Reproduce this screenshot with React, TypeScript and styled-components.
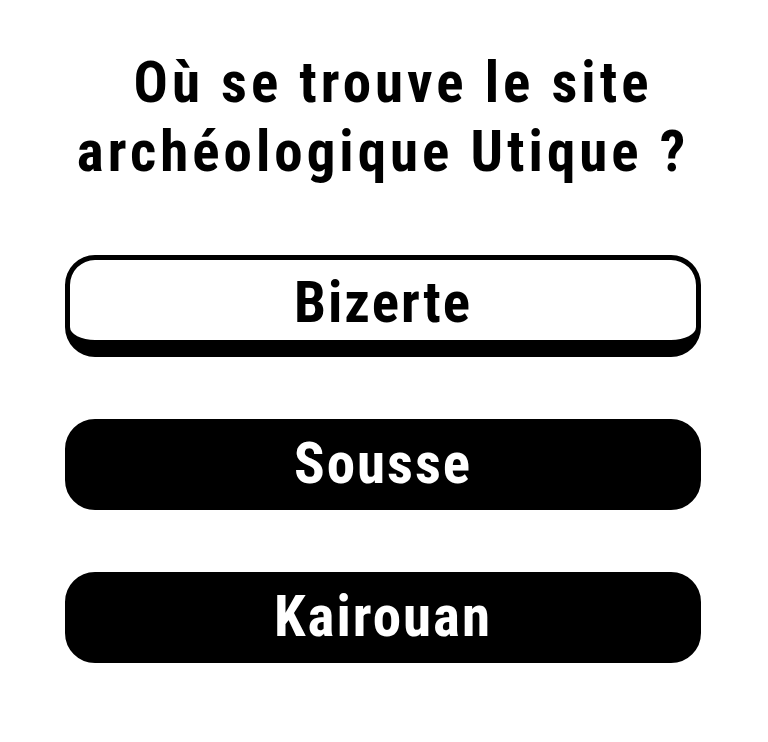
import styled, { createGlobalStyle } from "styled-components";

const GlobalStyle = createGlobalStyle`
  html, body {
    margin: 0;
    padding: 0;
    background: #fff;
  }
`;

const options = [
  { label: "Bizerte", selected: true },
  { label: "Sousse", selected: false },
  { label: "Kairouan", selected: false },
];

const App = () => {
  return (
    <>
      <GlobalStyle />
      <Page>
        <Question>
          <Line $indent={20}>Où se trouve le site</Line>
          <Line $indent={0}>archéologique Utique ?</Line>
        </Question>
        <Answers>
          {options.map((o) => (
            <Answer key={o.label} $selected={o.selected}>
              {o.label}
            </Answer>
          ))}
        </Answers>
      </Page>
    </>
  );
};

const Page = styled.div`
  width: 768px;
  height: 742px;
  box-sizing: border-box;
  padding: 48px 67px 0 65px;
  display: flex;
  flex-direction: column;
  font-family: "Roboto Condensed", "Liberation Sans", Arial, sans-serif;
  font-weight: 700;
`;

const Question = styled.h1`
  margin: 0;
  font-size: 57px;
  line-height: 69px;
  font-weight: 700;
  letter-spacing: 4px;
  text-align: center;
  color: #000;
`;

const Line = styled.span<{ $indent: number }>`
  display: block;
  padding-left: ${(p) => p.$indent}px;
  white-space: nowrap;
`;

const Answers = styled.div`
  margin-top: 69px;
  display: flex;
  flex-direction: column;
  gap: 62px;
`;

const Answer = styled.button<{ $selected: boolean }>`
  height: ${(p) => (p.$selected ? "102px" : "91px")};
  box-sizing: border-box;
  width: 100%;
  display: flex;
  align-items: center;
  justify-content: center;
  padding: ${(p) => (p.$selected ? "5px 0 0" : "0 0 3px")};
  border-radius: 30px;
  border: 5px solid #000;
  border-bottom-width: ${(p) => (p.$selected ? "17px" : "5px")};
  background: ${(p) => (p.$selected ? "#fff" : "#000")};
  color: ${(p) => (p.$selected ? "#000" : "#fff")};
  font-family: inherit;
  font-weight: 700;
  font-size: 57px;
  letter-spacing: 2px;
  line-height: 1;
  cursor: pointer;
`;

export default App;
